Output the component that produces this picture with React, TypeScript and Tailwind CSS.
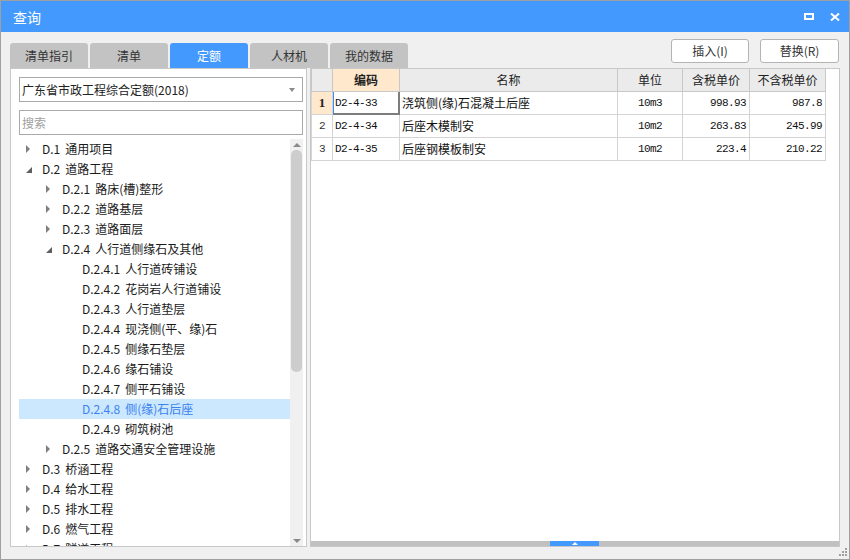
import React from 'react';

type Node = { l: number; t: string; a?: 'c' | 'e'; sel?: boolean };

const tree: Node[] = [
  { l: 0, t: 'D.1 通用项目', a: 'c' },
  { l: 0, t: 'D.2 道路工程', a: 'e' },
  { l: 1, t: 'D.2.1 路床(槽)整形', a: 'c' },
  { l: 1, t: 'D.2.2 道路基层', a: 'c' },
  { l: 1, t: 'D.2.3 道路面层', a: 'c' },
  { l: 1, t: 'D.2.4 人行道侧缘石及其他', a: 'e' },
  { l: 2, t: 'D.2.4.1 人行道砖铺设' },
  { l: 2, t: 'D.2.4.2 花岗岩人行道铺设' },
  { l: 2, t: 'D.2.4.3 人行道垫层' },
  { l: 2, t: 'D.2.4.4 现浇侧(平、缘)石' },
  { l: 2, t: 'D.2.4.5 侧缘石垫层' },
  { l: 2, t: 'D.2.4.6 缘石铺设' },
  { l: 2, t: 'D.2.4.7 侧平石铺设' },
  { l: 2, t: 'D.2.4.8 侧(缘)石后座', sel: true },
  { l: 2, t: 'D.2.4.9 砌筑树池' },
  { l: 1, t: 'D.2.5 道路交通安全管理设施', a: 'c' },
  { l: 0, t: 'D.3 桥涵工程', a: 'c' },
  { l: 0, t: 'D.4 给水工程', a: 'c' },
  { l: 0, t: 'D.5 排水工程', a: 'c' },
  { l: 0, t: 'D.6 燃气工程', a: 'c' },
  { l: 0, t: 'D.7 隧道工程', a: 'c' },
];

const levelPad = ['pl-0', 'pl-5', 'pl-10'];

const rows = [
  { n: '1', code: 'D2-4-33', name: '浇筑侧(缘)石混凝土后座', unit: '10m3', p1: '998.93', p2: '987.8' },
  { n: '2', code: 'D2-4-34', name: '后座木模制安', unit: '10m2', p1: '263.83', p2: '245.99' },
  { n: '3', code: 'D2-4-35', name: '后座钢模板制安', unit: '10m2', p1: '223.4', p2: '210.22' },
];

const tabs = ['清单指引', '清单', '定额', '人材机', '我的数据'];

const mono = "font-['Liberation_Mono',monospace] text-[11px] tracking-[-0.6px]";

function Arrow({ a }: { a?: 'c' | 'e' }) {
  if (a === 'c')
    return (
      <div className="w-0 h-0 ml-[7px] border-y-[4px] border-y-transparent border-l-[4px] border-l-[#7f7f7f]" />
    );
  if (a === 'e')
    return (
      <svg width="6" height="6" viewBox="0 0 6 6" className="ml-[7px] mt-[1px]">
        <path d="M6 0 L6 6 L0 6 Z" fill="#5f5f5f" />
      </svg>
    );
  return null;
}

export default function App() {
  return (
    <div className="w-[850px] h-[560px] border border-[#a0a0a0] bg-[#f0f0f0] flex flex-col relative overflow-hidden font-['Noto_Sans_CJK_SC','Noto_Sans',sans-serif] text-[#222]">
      {/* Title bar */}
      <div className="h-[31px] bg-[#4499ff] flex items-center justify-between pl-[12px] pr-[9px] shrink-0">
        <span className="text-white text-[14px] leading-none">查询</span>
        <div className="flex items-center gap-[16px]">
          <div className="w-[10px] h-[7px] border-2 border-white" />
          <svg width="10" height="8" viewBox="0 0 10 8">
            <path d="M1 0.5 L9 7.5 M9 0.5 L1 7.5" stroke="white" strokeWidth="2" />
          </svg>
        </div>
      </div>

      {/* Tabs row */}
      <div className="pt-[7px] px-[9px] shrink-0">
        <div className="flex justify-between h-[29px]">
          <div className="flex gap-[2px] mt-[4px]">
            {tabs.map((t, i) => (
              <div
                key={t}
                className={
                  i === 2
                    ? 'w-[78px] h-[25px] rounded-t-[3px] bg-[#4499ff] text-white text-[12px] flex items-center justify-center'
                    : 'w-[78px] h-[25px] rounded-t-[3px] bg-[#c3c3c3] text-[#333] text-[12px] flex items-center justify-center'
                }
              >
                {t}
              </div>
            ))}
          </div>
          <div className="flex gap-[11px] pr-[1px]">
            <div className="w-[78px] h-[24px] rounded-[3px] border border-[#b4b4b4] bg-white text-[12px] text-[#333] flex items-center justify-center">
              插入(I)
            </div>
            <div className="w-[79px] h-[24px] rounded-[3px] border border-[#b4b4b4] bg-white text-[12px] text-[#333] flex items-center justify-center">
              替换(R)
            </div>
          </div>
        </div>
      </div>

      {/* Panels */}
      <div className="px-[9px] flex gap-[3px] h-[479px] shrink-0">
        {/* Left panel */}
        <div className="w-[297px] h-full border border-[#c8c8c8] bg-white flex flex-col pl-[8px] pt-[8px]">
          <div className="w-[284px] h-[25px] border border-[#a9a9a9] flex items-center justify-between pl-[2px] pr-[7px] text-[12px] text-[#222] shrink-0">
            <span>广东省市政工程综合定额(2018)</span>
            <div className="w-0 h-0 border-x-[3px] border-x-transparent border-t-[4px] border-t-[#8a8a8a]" />
          </div>
          <div className="w-[284px] h-[25px] mt-[8px] border border-[#a9a9a9] flex items-center pl-[2px] text-[12px] text-[#a0a0a0] shrink-0">
            搜索
          </div>
          <div className="w-[284px] mt-[4px] flex-1 flex overflow-hidden">
            <div className="w-[271px] h-full overflow-hidden">
              {tree.map((n) => {
                const idx = n.t.indexOf(' ');
                return (
                  <div
                    key={n.t}
                    className={
                      'h-[20px] flex items-center text-[12px] leading-none ' +
                      levelPad[n.l] +
                      (n.sel ? ' bg-[#cce8ff] text-[#3b82f0]' : ' text-[#1a1a1a]')
                    }
                  >
                    <div className="w-[23px] h-full flex items-center shrink-0">
                      <Arrow a={n.a} />
                    </div>
                    <span className="whitespace-nowrap">{n.t.slice(0, idx)}</span>
                    <span className="whitespace-nowrap ml-[5px]">{n.t.slice(idx + 1)}</span>
                  </div>
                );
              })}
            </div>
            <div className="w-[13px] h-full bg-[#f0f0f0] flex flex-col items-center">
              <div className="mt-[4px] w-0 h-0 border-x-[4px] border-x-transparent border-b-[4px] border-b-[#8a8a8a]" />
              <div className="mt-[3px] w-[11px] h-[222px] rounded-[5px] bg-[#cdcdcd]" />
              <div className="flex-1" />
              <div className="mb-[3px] w-0 h-0 border-x-[4px] border-x-transparent border-t-[4px] border-t-[#8a8a8a]" />
            </div>
          </div>
        </div>

        {/* Right panel */}
        <div className="flex-1 h-full border border-[#c8c8c8] bg-white flex flex-col">
          <div className="grid grid-cols-[22px_67px_218px_65px_67px_76px] w-[515px] text-[12px]">
            {/* header */}
            <div className="h-[23px] bg-[#ebebeb] border-l border-r border-b border-[#c8c8c8]" />
            <div className="h-[23px] bg-[#ffe8cc] border-r border-b border-[#c8c8c8] flex items-center justify-center font-bold text-[#222]">
              编码
            </div>
            <div className="h-[23px] bg-[#ebebeb] border-r border-b border-[#c8c8c8] flex items-center justify-center text-[#222]">
              名称
            </div>
            <div className="h-[23px] bg-[#ebebeb] border-r border-b border-[#c8c8c8] flex items-center justify-center text-[#222]">
              单位
            </div>
            <div className="h-[23px] bg-[#ebebeb] border-r border-b border-[#c8c8c8] flex items-center justify-center text-[#222]">
              含税单价
            </div>
            <div className="h-[23px] bg-[#ebebeb] border-r border-b border-[#c8c8c8] flex items-center justify-center text-[#222]">
              不含税单价
            </div>
            {rows.map((r, i) => (
              <React.Fragment key={r.n}>
                <div
                  className={
                    i === 0
                      ? "h-[23px] bg-[#ffe8cc] border-l border-r border-b border-[#d4d4d4] flex items-center justify-center font-['Liberation_Serif',serif] font-bold text-[13px]"
                      : 'h-[23px] bg-white border-l border-r border-b border-[#d4d4d4] flex items-center justify-center ' + mono + ' text-[#333]'
                  }
                >
                  {r.n}
                </div>
                <div className={'h-[23px] relative border-r border-b border-[#d4d4d4] flex items-center pl-[2px] text-[#111] ' + mono}>
                  {r.code}
                  {i === 0 && (
                    <div className="absolute left-0 top-0 -right-px -bottom-px border-l border-l-[#3b8cff] border-r-2 border-b-2 border-r-[#7d7d7d] border-b-[#7d7d7d]" />
                  )}
                </div>
                <div className="h-[23px] border-r border-b border-[#d4d4d4] flex items-center pl-[2px] text-[#111] whitespace-nowrap">
                  {r.name}
                </div>
                <div className={'h-[23px] border-r border-b border-[#d4d4d4] flex items-center justify-center text-[#111] ' + mono}>
                  {r.unit}
                </div>
                <div className={'h-[23px] border-r border-b border-[#d4d4d4] flex items-center justify-end pr-[3px] text-[#111] ' + mono}>
                  {r.p1}
                </div>
                <div className={'h-[23px] border-r border-b border-[#d4d4d4] flex items-center justify-end pr-[3px] text-[#111] ' + mono}>
                  {r.p2}
                </div>
              </React.Fragment>
            ))}
          </div>
          <div className="flex-1" />
          <div className="h-[5px] bg-[#c0c0c0] flex shrink-0">
            <div className="ml-[239px] w-[49px] h-full bg-[#4499ff] flex items-center justify-center">
              <div className="w-0 h-0 border-x-[3px] border-x-transparent border-b-[3px] border-b-white" />
            </div>
          </div>
        </div>
      </div>

      {/* resize grip */}
      <div className="absolute right-[2px] bottom-[3px] w-[8px] h-[8px]">
        <div className="absolute right-0 top-0 w-[2px] h-[2px] bg-[#a0a0a0]" />
        <div className="absolute right-0 top-[3px] w-[2px] h-[2px] bg-[#a0a0a0]" />
        <div className="absolute right-[3px] top-[3px] w-[2px] h-[2px] bg-[#a0a0a0]" />
        <div className="absolute right-0 top-[6px] w-[2px] h-[2px] bg-[#a0a0a0]" />
        <div className="absolute right-[3px] top-[6px] w-[2px] h-[2px] bg-[#a0a0a0]" />
        <div className="absolute right-[6px] top-[6px] w-[2px] h-[2px] bg-[#a0a0a0]" />
      </div>
    </div>
  );
}
